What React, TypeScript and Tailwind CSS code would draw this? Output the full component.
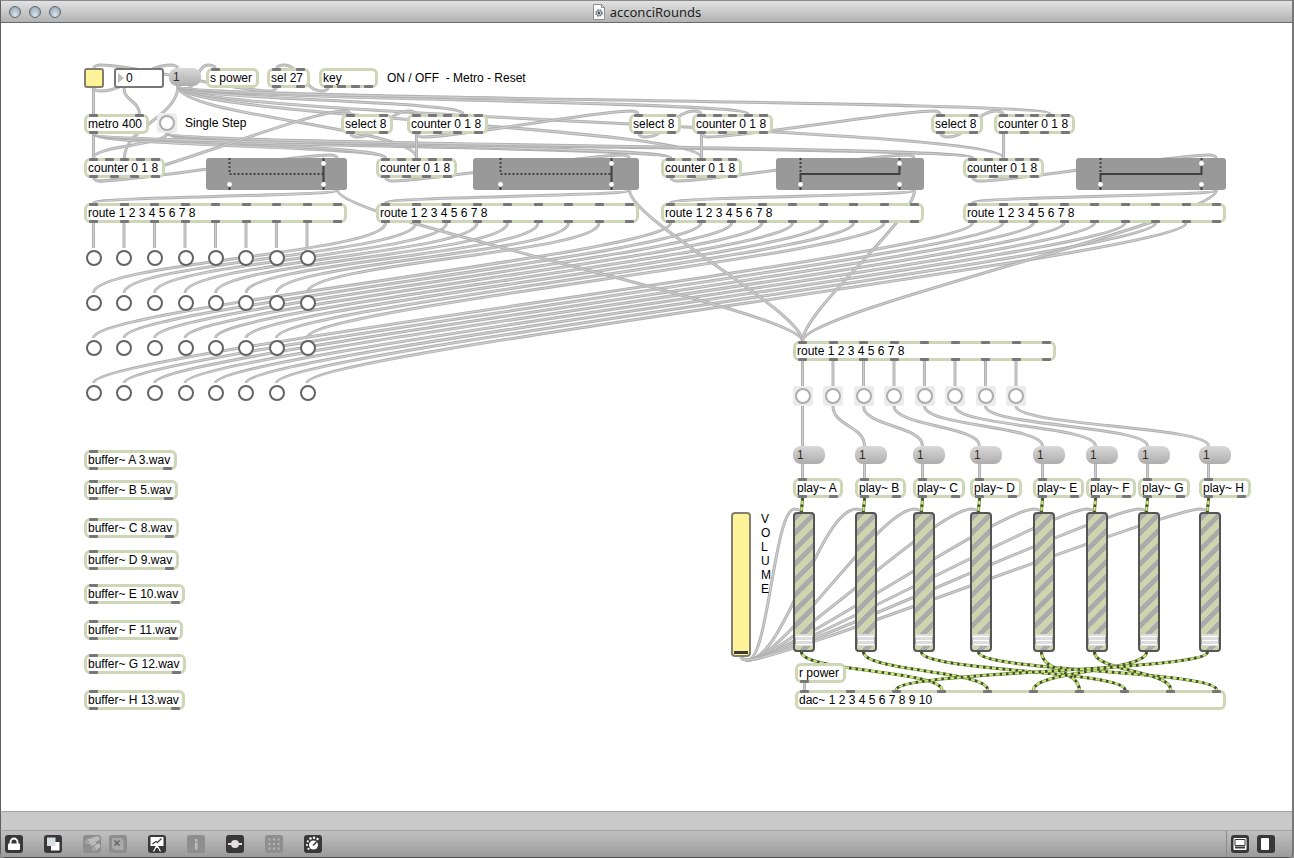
import { useState } from "react";
import type { CSSProperties, ReactNode } from "react";

interface BoxData {
  text: string;
  x: number;
  y: number;
  w: number;
  ins?: number;
  outs?: number;
}

interface Cord {
  from: [number, number];
  to: [number, number];
  signal?: boolean;
}

// Distance from the edge of a box to the middle of its first inlet
const PORT = 9.5;

const LETTERS = ["A", "B", "C", "D", "E", "F", "G", "H"];
const EIGHT = [0, 1, 2, 3, 4, 5, 6, 7];
const BANG_X = [94, 124, 155, 186, 216, 246, 277, 308];
const BANG_ROWS = [235, 280, 325, 370];
const STEP_X = [803, 833, 864, 894, 925, 955, 986, 1016];
const VOICE_X = [793, 855, 913, 970, 1033, 1086, 1138, 1199];
const PLAY_W = [50, 51, 52, 52, 51, 50, 52, 52];

// One entry per round: counter / gswitch / route column
const ROUNDS = [
  { x: 84, gateX: 206, gateW: 141, open: false },
  { x: 376, gateX: 473, gateW: 166, open: false },
  { x: 661, gateX: 776, gateW: 148, open: true },
  { x: 963, gateX: 1076, gateW: 150, open: true },
];

const SELECTS = [
  { x: 341, counterX: 407 },
  { x: 629, counterX: 692 },
  { x: 931, counterX: 994 },
];

const BUFFERS: BoxData[] = [
  { text: "buffer~ A 3.wav", x: 84, y: 427, w: 93 },
  { text: "buffer~ B 5.wav", x: 84, y: 457, w: 94 },
  { text: "buffer~ C 8.wav", x: 84, y: 495, w: 95 },
  { text: "buffer~ D 9.wav", x: 84, y: 527, w: 95 },
  { text: "buffer~ E 10.wav", x: 84, y: 561, w: 101 },
  { text: "buffer~ F 11.wav", x: 84, y: 597, w: 99 },
  { text: "buffer~ G 12.wav", x: 84, y: 631, w: 102 },
  { text: "buffer~ H 13.wav", x: 84, y: 667, w: 101 },
].map((b) => ({ ...b, ins: 1, outs: 2 }));

const BOXES: BoxData[] = [
  { text: "s power", x: 206, y: 45, w: 53, ins: 1 },
  { text: "sel 27", x: 267, y: 45, w: 43, ins: 2, outs: 2 },
  { text: "key", x: 319, y: 45, w: 59, outs: 4 },
  { text: "metro 400", x: 84, y: 91, w: 65, ins: 2, outs: 1 },
  ...SELECTS.flatMap((s) => [
    { text: "select 8", x: s.x, y: 91, w: 52, ins: 2, outs: 2 },
    { text: "counter 0 1 8", x: s.counterX, y: 91, w: 81, ins: 5, outs: 4 },
  ]),
  ...ROUNDS.flatMap((r) => [
    { text: "counter 0 1 8", x: r.x, y: 135, w: 81, ins: 5, outs: 4 },
    { text: "route 1 2 3 4 5 6 7 8", x: r.x, y: 180, w: 263, ins: 9, outs: 9 },
  ]),
  { text: "route 1 2 3 4 5 6 7 8", x: 793, y: 318, w: 263, ins: 9, outs: 9 },
  ...LETTERS.map((l, i) => ({ text: `play~ ${l}`, x: VOICE_X[i], y: 455, w: PLAY_W[i], ins: 1, outs: 2 })),
  { text: "r power", x: 795, y: 640, w: 51, outs: 1 },
  { text: "dac~ 1 2 3 4 5 6 7 8 9 10", x: 795, y: 667, w: 431, ins: 10 },
  ...BUFFERS,
];

const buildCords = (): Cord[] => {
  const cords: Cord[] = [];
  const add = (x0: number, y0: number, x1: number, y1: number, signal = false) =>
    cords.push({ from: [x0, y0], to: [x1, y1], signal });

  // transport
  add(93.5, 65, 93.5, 91);
  add(93.5, 65, 178, 45);
  add(276.5, 65, 93.5, 45);
  add(328.5, 65, 276.5, 45);
  add(178, 63, 215.5, 45);
  add(124, 65, 139.5, 91);

  // reset
  ROUNDS.forEach((r) => add(178, 63, r.x + PORT + 31, 135));
  SELECTS.forEach((s) => add(178, 63, s.counterX + PORT + 46.5, 91));

  // metro and single step
  ROUNDS.forEach((r) => {
    add(93.5, 111, r.x + PORT, 135);
    add(167, 110, r.x + PORT, 135);
  });

  SELECTS.forEach((s, i) => {
    add(s.x + PORT, 111, s.counterX + PORT, 91);
    add(s.counterX + PORT, 111, s.counterX + PORT, 135);
    if (i === 0) add(93.5, 155, s.x + PORT, 91);
    else add(SELECTS[i - 1].counterX + PORT, 111, s.x + PORT, 91);
  });

  ROUNDS.forEach((r, row) => {
    const gateOut = r.gateX + r.gateW - PORT;
    add(r.x + PORT, 155, gateOut, 135);
    add(gateOut, 167, r.x + PORT, 180);
    EIGHT.forEach((i) => add(r.x + PORT + i * 30.5, 200, 93.5 + i * 30.5, BANG_ROWS[row] - 10));
  });
  ROUNDS.forEach((r) => add(r.gateX + r.gateW - PORT, 167, 802.5, 318));

  // voices
  const dacInlet = [3, 4, 7, 9, 6, 8, 5, 2];
  EIGHT.forEach((i) => {
    const x = VOICE_X[i] + PORT;
    const stepX = 802.5 + i * 30.5;
    add(stepX, 338, stepX, 363);
    add(stepX, 383, x, 423);
    add(x, 441, x, 455);
    add(741, 634, x - 1, 489);
    add(x, 475, x - 1, 489, true);
    add(x - 1, 629, 804.5 + dacInlet[i] * 45.8, 667, true);
  });
  add(804.5, 660, 804.5, 667);

  return cords;
};

const CORDS = buildCords();

const cordPath = ({ from: [x0, y0], to: [x1, y1] }: Cord) => {
  const dy = y1 - y0;
  if (dy > 0) {
    const k = Math.min(30, dy / 2);
    return `M${x0} ${y0}C${x0} ${y0 + k} ${x1} ${y1 - k} ${x1} ${y1}`;
  }
  // Going up: hook under the outlet, cross over, hook into the inlet from above
  const dir = Math.sign(x1 - x0);
  const c = dir * Math.min(Math.abs(x1 - x0) / 3, 36);
  const a = x0 + dir * 7;
  const b = x1 - dir * 7;
  return `M${x0} ${y0}Q${x0 + dir * 2} ${y0 + 3} ${a} ${y0 + 3}C${a + c} ${y0 + 3} ${b - c} ${y1 - 3} ${b} ${y1 - 3}Q${x1 - dir * 2} ${y1 - 3} ${x1} ${y1}`;
};

function Cords() {
  return (
    <svg className="pointer-events-none absolute inset-0 h-full w-full" fill="none" aria-hidden="true">
      {CORDS.map((cord, i) => {
        const d = cordPath(cord);
        if (cord.signal) {
          return (
            <g key={i}>
              <path d={d} stroke="#85925f" strokeWidth="3.2" />
              <path d={d} stroke="#c6f070" strokeWidth="1.8" />
              <path d={d} stroke="#414b2b" strokeWidth="2.6" strokeDasharray="2.5 4" />
            </g>
          );
        }
        return (
          <g key={i}>
            <path d={d} stroke="#b0b0b0" strokeWidth="3" />
            <path d={d} stroke="#cecece" strokeWidth="1.2" />
          </g>
        );
      })}
    </svg>
  );
}

const at = (x: number, y: number, w?: number): CSSProperties => ({ left: x, top: y, width: w });

function Ports({ count, className }: { count: number; className: string }) {
  return (
    <span className={`absolute inset-x-0.5 flex justify-between ${className}`}>
      {Array.from({ length: count }, (_, i) => (
        <span key={i} className="h-[3px] w-[9px] rounded-[1px] bg-[#777777]" />
      ))}
    </span>
  );
}

function ObjectBox({ box }: { box: BoxData }) {
  return (
    <div
      className="absolute flex h-5 items-center rounded-md border-[3px] border-[#cdd7b7] bg-white pl-px leading-[14px] whitespace-pre"
      style={at(box.x, box.y, box.w)}
    >
      {box.ins && <Ports count={box.ins} className="-top-[3px]" />}
      {box.text}
      {box.outs && <Ports count={box.outs} className="-bottom-[3px]" />}
    </div>
  );
}

function Message({ x, y }: { x: number; y: number }) {
  return (
    <button
      type="button"
      className="absolute h-[18px] w-8 rounded-lg bg-linear-to-b from-[#d9d9d9] to-[#adadad] pl-1 text-left leading-[18px] text-[#3a2a1a]"
      style={at(x, y)}
    >
      1
    </button>
  );
}

function Bang({ x, y, dark = false, label }: { x: number; y: number; dark?: boolean; label: string }) {
  return (
    <button
      type="button"
      aria-label={label}
      className={`absolute flex size-5 items-center justify-center rounded-[3px] ${dark ? "" : "bg-[#ececec]"}`}
      style={at(x - 10, y - 10)}
    >
      <span className={`size-4 rounded-full border-2 bg-white ${dark ? "border-[#636363]" : "border-[#adadad]"}`} />
    </button>
  );
}

function Gate({ x, w, open }: { x: number; w: number; open: boolean }) {
  const l = Math.round(w * 0.16) + 0.5;
  const r = w - l;
  return (
    <svg className="absolute h-8 rounded-[3px] bg-[#999999]" style={at(x, 135, w)} fill="none" stroke="#404040" strokeWidth="2">
      {open ? (
        <>
          <path d={`M${l} 0V14`} strokeDasharray="2 2" />
          <path d={`M${l} 26V16H${r}V6`} />
          <path d={`M${r} 0V4`} strokeDasharray="2 2" />
        </>
      ) : (
        <>
          <path d={`M${l} 0V16H${r}`} strokeDasharray="2 2" />
          <path d={`M${r} 0V26`} />
        </>
      )}
      <path d={`M${l} 28V32M${r} 28V32`} />
      <g fill="#fff" stroke="none">
        <circle cx={r} cy="5.5" r="2.4" />
        <circle cx={r} cy="26.5" r="2.4" />
        <circle cx={l} cy="26.5" r="2.4" />
      </g>
    </svg>
  );
}

function Gain({ x, label }: { x: number; label: string }) {
  return (
    <input
      type="range"
      aria-label={label}
      defaultValue={0}
      className="absolute h-[140px] w-[22px] appearance-none rounded border-2 border-[#555555] bg-[repeating-linear-gradient(135deg,#ababab_0_5px,#cdd4ae_5px_11px)] px-px pb-1 [direction:rtl] [writing-mode:vertical-lr] [&::-webkit-slider-thumb]:h-3 [&::-webkit-slider-thumb]:w-4 [&::-webkit-slider-thumb]:appearance-none [&::-webkit-slider-thumb]:bg-[repeating-linear-gradient(#dddddd_0_2px,#ffffff_2px_3px,#dddddd_3px_4px)]"
      style={at(x, 489)}
    />
  );
}

function Patcher() {
  const [running, setRunning] = useState(false);
  const [tempo, setTempo] = useState("0");

  return (
    <main className="relative min-h-[720px] flex-1 overflow-hidden bg-white font-['Liberation_Sans',Arial,sans-serif] text-[12px] text-black shadow-[inset_1px_0_#5e5e5e]">
      <Cords />

      {BOXES.map((box) => (
        <ObjectBox key={`${box.x}-${box.y}`} box={box} />
      ))}

      <input
        type="checkbox"
        aria-label="Metro on"
        checked={running}
        onChange={(e) => setRunning(e.target.checked)}
        className="absolute size-5 appearance-none rounded-[3px] border-2 border-[#827e70] bg-[#fff39a]"
        style={at(84, 45)}
      />
      <div className="absolute flex h-5 w-[50px] items-center rounded-[3px] border-2 border-[#777777] bg-white pl-[2px]" style={at(114, 45)}>
        <svg viewBox="0 0 6 10" className="h-[10px] w-1.5" fill="#bdbdbd" aria-hidden="true">
          <path d="M0 0L6 5L0 10Z" />
        </svg>
        <input
          type="text"
          aria-label="Tempo"
          value={tempo}
          onChange={(e) => setTempo(e.target.value)}
          className="w-8 bg-transparent pl-[2px] leading-[14px] outline-none"
        />
      </div>
      <Message x={169} y={45} />
      <span className="absolute leading-4 whitespace-pre" style={at(387, 47)}>ON / OFF  - Metro - Reset</span>

      <Bang x={167} y={100} label="Single Step" />
      <span className="absolute leading-4" style={at(185, 92)}>Single Step</span>

      {ROUNDS.map((r) => (
        <Gate key={r.x} x={r.gateX} w={r.gateW} open={r.open} />
      ))}

      {BANG_ROWS.map((y, row) =>
        BANG_X.map((x, i) => <Bang key={`${row}-${i}`} x={x} y={y} dark label={`Round ${row + 1} step ${i + 1}`} />)
      )}

      {EIGHT.map((i) => (
        <div key={i}>
          <Bang x={STEP_X[i]} y={373} label={`Trigger ${LETTERS[i]}`} />
          <Message x={VOICE_X[i]} y={423} />
          <Gain x={VOICE_X[i]} label={`Gain ${LETTERS[i]}`} />
        </div>
      ))}

      <input
        type="range"
        id="volume"
        defaultValue={0}
        className="absolute h-[145px] w-5 appearance-none rounded border-2 border-[#857f70] bg-[#fff39a] px-px pb-px [direction:rtl] [writing-mode:vertical-lr] [&::-webkit-slider-thumb]:h-[3px] [&::-webkit-slider-thumb]:w-3.5 [&::-webkit-slider-thumb]:appearance-none [&::-webkit-slider-thumb]:bg-[#3c3b33]"
        style={at(731, 489)}
      />
      <label htmlFor="volume" className="absolute w-3 leading-[14px] break-all" style={at(761, 489)}>
        VOLUME
      </label>
    </main>
  );
}

function TitleBar() {
  return (
    <header className="relative flex h-[23px] shrink-0 items-center justify-center border-t border-b border-l border-t-[#8a8a8a] border-b-[#6a6a6a] border-l-[#5e5e5e] bg-linear-to-b from-[#e2e2e2] to-[#b2b2b2]">
      <div className="absolute left-2 flex gap-2">
        {["Close", "Minimize", "Zoom"].map((name) => (
          <button
            key={name}
            type="button"
            aria-label={name}
            className="size-3 rounded-full border border-[#5b6670] bg-radial-[at_50%_80%] from-[#dce7ef] to-[#8798a6]"
          />
        ))}
      </div>
      <div className="flex items-center gap-1">
        <svg viewBox="0 0 14 16" className="h-4 w-3.5" fill="none" aria-hidden="true">
          <path d="M1.5 .5H9.5L12.5 3.5V15.5H1.5Z" fill="#fafafa" stroke="#8f8f8f" />
          <path d="M9.5 .5V3.5H12.5" stroke="#8f8f8f" />
          <circle cx="7" cy="9" r="3" fill="#b9c3cb" stroke="#6c7780" strokeWidth="1.5" strokeDasharray="1.6 .8" />
          <circle cx="7" cy="9" r="1.2" fill="#4d5962" />
        </svg>
        <h1 className="font-['Noto_Sans','Open_Sans',sans-serif] text-[13px] leading-5 text-[#222222]">acconciRounds</h1>
      </div>
    </header>
  );
}

function ToolButton({ label, dim = false, children }: { label: string; dim?: boolean; children: ReactNode }) {
  return (
    <button type="button" aria-label={label} className={`size-[18px] rounded-[3px] ${dim ? "bg-[#8e8e8e]" : "bg-[#383838]"}`}>
      <svg viewBox="0 0 18 18" className="size-[18px]" fill="none">
        {children}
      </svg>
    </button>
  );
}

const GRID = [4.5, 9, 13.5];

function ToolBar() {
  return (
    <footer className="flex h-7 shrink-0 items-center justify-between border-t border-b border-l border-t-[#a3a3a3] border-b-[#4a4a4a] border-l-[#5e5e5e] bg-linear-to-b from-[#c0c0c0] to-[#9b9b9b] pl-1">
      <div className="flex items-center gap-[21px]">
        <ToolButton label="Lock">
          <rect x="3" y="8.5" width="12" height="6.5" rx="1" fill="#fff" />
          <path d="M5.5 9V7A3.5 3.5 0 0 1 12.5 7V9" stroke="#fff" strokeWidth="1.8" />
        </ToolButton>
        <ToolButton label="New view">
          <rect x="7" y="7" width="8.5" height="8.5" fill="#fff" />
          <rect x="3" y="2.5" width="8.5" height="8.5" fill="#d9dede" />
        </ToolButton>
        <div className="flex gap-2">
          <ToolButton label="Patch cords" dim>
            <g stroke="#bcbcbc" strokeLinecap="round">
              <path d="M4 7L14.5 3.5" strokeWidth="4.5" />
              <path d="M8.5 9.5L12 8" strokeWidth="2.5" />
              <path d="M11 14L15 11" strokeWidth="4.5" />
            </g>
            <circle cx="4" cy="7" r="1.5" stroke="#8e8e8e" />
            <circle cx="11" cy="14" r="1.5" stroke="#8e8e8e" />
          </ToolButton>
          <ToolButton label="Close view" dim>
            <path d="M3 3H12L14.5 5.5V15H5.5L3 12.5Z" fill="#a9a9a9" />
            <path d="M5.5 5.5L10.5 10.5M10.5 5.5L5.5 10.5" stroke="#626262" strokeWidth="1.5" />
          </ToolButton>
        </div>
        <ToolButton label="Presentation">
          <rect x="2.5" y="2" width="13" height="9" fill="#fff" />
          <path d="M4.5 9L8 6.5L9.5 7.5L13.5 3.5" stroke="#383838" strokeWidth="1.2" />
          <path d="M9 11V13M8.5 11L5.5 16.5M9.5 11L12.5 16.5" stroke="#fff" strokeWidth="1.2" />
        </ToolButton>
        <ToolButton label="Inspector" dim>
          <rect x="8" y="4" width="2.5" height="2.5" fill="#bdbdbd" />
          <rect x="8" y="7.5" width="2.5" height="7" fill="#bdbdbd" />
        </ToolButton>
        <ToolButton label="Signal">
          <path d="M2 9H16" stroke="#e4dfe0" strokeWidth="2" />
          <circle cx="9" cy="9" r="4" fill="#e4dfe0" />
        </ToolButton>
        <ToolButton label="Grid" dim>
          {GRID.map((y) => GRID.map((x) => <rect key={`${x}-${y}`} x={x - 1} y={y - 1} width="2" height="2" fill="#b8b8b8" />))}
        </ToolButton>
        <ToolButton label="Parameters">
          <circle cx="9.5" cy="10" r="4.5" fill="#fff" />
          <path d="M9 10.5L12.5 7" stroke="#383838" strokeWidth="1.5" />
          <g fill="#fff">
            <circle cx="3" cy="10" r="1.1" />
            <circle cx="3.8" cy="6.3" r="1.1" />
            <circle cx="6.5" cy="3.5" r="1.2" />
            <circle cx="10" cy="2.8" r="1.2" />
            <circle cx="13.5" cy="4" r="1.2" />
            <circle cx="4.5" cy="13.8" r="1.1" />
          </g>
        </ToolButton>
      </div>
      <div className="flex h-full items-center gap-2 border-l border-[#8a8a8a] pr-[17px] pl-1">
        <ToolButton label="Bottom pane">
          <rect x="2.5" y="3" width="13" height="12" rx="1" fill="#fff" />
          <path d="M4 4.5H14V10.5H4Z" fill="#fff" stroke="#383838" />
          <path d="M4 11.5H14V13.5H4Z" fill="#383838" />
        </ToolButton>
        <ToolButton label="Side pane">
          <rect x="2.5" y="3" width="13" height="12" rx="1" fill="#383838" />
          <rect x="4" y="3" width="8" height="12" rx="1" fill="#fff" />
        </ToolButton>
      </div>
    </footer>
  );
}

export default function App() {
  return (
    <div className="min-h-screen bg-[#8c8c8c]">
      <div className="flex min-h-screen flex-col overflow-hidden rounded-b-md border-r-2 border-r-[#777777]">
        <TitleBar />
        <Patcher />
        <div className="h-[19px] shrink-0 border-t border-l border-t-[#a3a3a3] border-l-[#5e5e5e] bg-[#c9c9c9]" />
        <ToolBar />
      </div>
    </div>
  );
}
